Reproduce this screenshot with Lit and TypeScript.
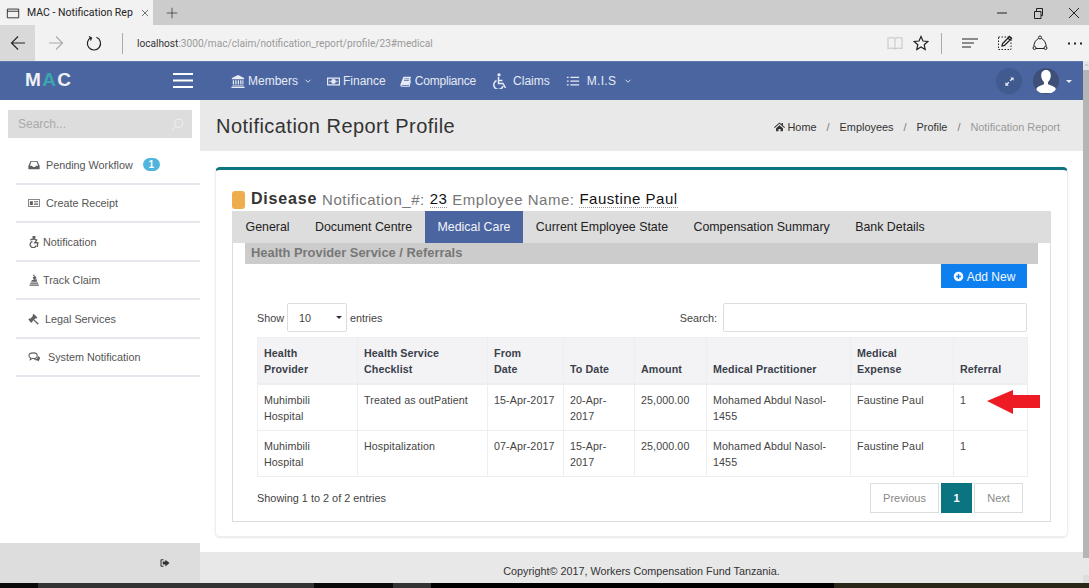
import { LitElement, html, css, svg } from 'lit';
import { customElement } from 'lit/decorators.js';

const icon = (body: unknown, size = 14, box = 16) => html`<svg class="ico" width=${size} height=${size} viewBox="0 0 ${box} ${box}">${body}</svg>`;

const icons = {
  bank: svg`<path fill="currentColor" d="M8 1 1 4.500V6h14V4.500zM2 7h1.500v5H2zm2.800 0h1.500v5H4.800zm2.900 0h1.500v5H7.700zm2.800 0H12v5h-1.500zm2.500 0h1.200v5H13zM1.500 13h13v1h-13zM.5 14.500h15V16H.5z"/>`,
  money: svg`<path fill="currentColor" fill-rule="evenodd" d="M0 3h16v10H0zm1.500 1.500v7h13v-7zM8 5a3 3 0 1 1 0 6 3 3 0 0 1 0-6zM3 7h1.500v2H3zm8.500 0H13v2h-1.500z"/>`,
  book: svg`<path fill="currentColor" d="M5 1h11l-.7 2.500L13 13H3.500c-1 0-1.300.7-1 1.300H13l1.600-8 1.400.7L14 15.500H2.500C1 15.500 0 14 .6 12.500zm1.500 2.500-.3 1.300h7l.3-1.300zM6 6l-.3 1.300h7L13 6z"/>`,
  wheel: svg`<g fill="none" stroke="currentColor" stroke-width="1.500"><circle cx="8" cy="1.800" r=".9" fill="currentColor"/><path d="M7.500 4v6.500h4.500l2.500 4.500M7.500 7.500h4"/><path d="M5.500 7.500a4.700 4.700 0 1 0 6.500 5.500"/></g>`,
  list: svg`<path fill="currentColor" d="M1 3h2v1.500H1zm4 0h10v1.500H5zM1 7.300h2v1.500H1zm4 0h10v1.500H5zM1 11.600h2v1.500H1zm4 0h10v1.500H5z"/>`,
  inbox: svg`<path fill="currentColor" fill-rule="evenodd" d="M3.500 2.500h9L15.500 9v4.500H.5V9zm1 1.300L2.500 9h3l1 1.800h3l1-1.800h3l-2-5.200z"/>`,
  receipt: svg`<path fill="currentColor" fill-rule="evenodd" d="M0 3h16v10H0zm1 1v8h14V4zm1.500 1.500h4v5h-4zm5.500 0h5.500v1H8zm0 2h5.500v1H8zm0 2h5.500v1H8z"/>`,
  access: svg`<g fill="none" stroke="currentColor" stroke-width="1.800"><circle cx="8" cy="1.800" r="1.300" fill="currentColor"/><path d="M3 5 8 4l3.500 1.500L9 9h4l-.5 5.500"/><path d="M6 7.300a4.200 4.200 0 1 0 5 5.500"/></g>`,
  track: svg`<path fill="currentColor" d="M6.500 1h2v1.200h-2zM9 2l2.500 3.200L8 7.500 6.200 5zM2 14h12.500v1.500H2zM3 11.200h10.500v1.800H3zM5 8.200l6.500-1.400.5 3.400H4.200z"/>`,
  gavel: svg`<path fill="currentColor" d="M7.500 1l5 5-1.500 1.500-1-.6-1.700 1.700 6 5.500-1.300 1.400-5.700-5.900-1.700 1.700.6 1L4 13 .5 8.500 2 7l1 .6L6.600 4 6 3z"/>`,
  chat: svg`<g fill="none" stroke="currentColor" stroke-width="1.400"><path d="M7 2.500c3 0 5.300 1.500 5.300 3.700S10 10 7 10H5.500L3 11.500l.5-2.300C2 8.500 1.300 7.500 1.300 6.200 1.300 4 4 2.500 7 2.500z"/></g><path fill="currentColor" d="M13.500 6.500c1.500.7 2.500 1.800 2.500 3 0 1-.7 1.900-1.500 2.400l.5 2-2.500-1.400c-2 .2-4-.5-5-1.500 3.500.3 6.500-1.800 6-4.500z"/>`,
  home: svg`<path fill="currentColor" d="M8 2 0 9l1 1 7-6 7 6 1-1-3-2.600V3h-2v1.700zM3 10.500 8 6l5 4.500V15H9.500v-3.500h-3V15H3z"/>`,
  plus: svg`<path fill="currentColor" fill-rule="evenodd" d="M8 1a7 7 0 1 1 0 14A7 7 0 0 1 8 1zM7 4.500v2.500H4.500v2H7v2.500h2V9h2.500V7H9V4.500z"/>`,
  signout: svg`<path fill="currentColor" d="M6 3H3.500C2.500 3 2 3.500 2 4.500v7c0 1 .5 1.500 1.500 1.500H6v-1.300H3.400V4.300H6zM8.500 3.500 14 8l-5.500 4.500V10H5V6h3.500z"/>`,
  search: svg`<g fill="none" stroke="currentColor" stroke-width="1"><circle cx="9.500" cy="6.500" r="5"/><path d="M6 10 1.500 14.500"/></g>`,
};

const chevron = svg`<path fill="none" stroke="currentColor" stroke-width="1.800" d="m3 5.500 5 5 5-5"/>`;

const menu = [
  { label: 'Pending Workflow', icon: icons.inbox, gap: 'wide', badge: '1' },
  { label: 'Create Receipt', icon: icons.receipt, gap: 'wide' },
  { label: 'Notification', icon: icons.access, gap: 'narrow' },
  { label: 'Track Claim', icon: icons.track, gap: 'narrow' },
  { label: 'Legal Services', icon: icons.gavel, gap: 'mid' },
  { label: 'System Notification', icon: icons.chat, gap: 'wider' },
];

const tabs = ['General', 'Document Centre', 'Medical Care', 'Current Employee State', 'Compensation Summary', 'Bank Details'];

const columns = ['Health\nProvider', 'Health Service\nChecklist', 'From\nDate', 'To Date', 'Amount', 'Medical Practitioner', 'Medical\nExpense', 'Referral'];

const rows = [
  ['Muhimbili Hospital', 'Treated as outPatient', '15-Apr-2017', '20-Apr-2017', '25,000.00', 'Mohamed Abdul Nasol-1455', 'Faustine Paul', '1'],
  ['Muhimbili Hospital', 'Hospitalization', '07-Apr-2017', '15-Apr-2017', '25,000.00', 'Mohamed Abdul Nasol-1455', 'Faustine Paul', '1'],
];

const widths = [100, 130, 76, 71, 72, 144, 103, 74];

@customElement('app-root')
export class AppRoot extends LitElement {
  static styles = css`
    :host {
      display: flex;
      flex-direction: column;
      width: 1089px;
      height: 588px;
      overflow: hidden;
      font-family: "Liberation Sans", Arial, sans-serif;
      color: #333;
      background: #fff;
    }
    .ico { display: block; flex: none; }

    /* browser chrome */
    .strip { display: flex; height: 25px; background: #ccc; flex: none; }
    .tab {
      width: 153px; display: flex; align-items: center; background: #f2f2f2;
      padding: 0 6px 0 6px; box-sizing: border-box; gap: 7px;
      font: 10.500px Roboto, sans-serif; color: #222;
    }
    .tab-title { width: 108px; white-space: nowrap; }
    .new-tab { width: 38px; display: flex; align-items: center; justify-content: center; color: #333; }
    .win { margin-left: auto; display: flex; align-items: center; gap: 20px; padding-right: 7px; color: #222; }
    .toolbar { display: flex; align-items: center; height: 36px; background: #f2f2f2; flex: none; color: #222; }
    .back { width: 35px; height: 36px; display: flex; align-items: center; justify-content: center; background: #d9d9d9; }
    .fwd { width: 42px; display: flex; justify-content: center; color: #aaa; }
    .reload { width: 33px; display: flex; justify-content: center; }
    .sep { width: 1px; height: 21px; background: #aaa; flex: none; }
    .url { margin-left: 14px; font: 10.150px Roboto, sans-serif; color: #999; white-space: nowrap; }
    .url b { font-weight: 400; color: #333; }
    .tools { margin-left: auto; display: flex; align-items: center; }
    .tools .t { display: flex; justify-content: center; width: 35px; }

    /* body */
    .page { flex: 1; min-height: 0; display: flex; }
    .main-col { flex: 1; min-width: 0; display: flex; flex-direction: column; }
    .scrollbar { width: 6px; flex: none; display: flex; flex-direction: column; background: #e8e8e8; }
    .sb-top { height: 9px; background: #e6e6e6; flex: none; display: flex; justify-content: center; padding-top: 2px; box-sizing: border-box; color: #999; }
    .sb-thumb { height: 488px; background: #b5b5b5; flex: none; }
    .sb-low { margin-top: auto; height: 8px; flex: none; background: #ddd; }

    .nav { height: 39px; flex: none; display: flex; align-items: center; background: #4a65a0; border-top: 1px solid #5f78ad; box-sizing: border-box; color: #e6ebf5; font-size: 12px; }
    .logo { width: 173px; padding-left: 25px; box-sizing: border-box; font-weight: 700; font-size: 19px; letter-spacing: 1.400px; color: #eef1f7; margin-top: -3px; }
    .logo i { font-style: normal; color: #3aa6ad; }
    .burger { width: 58px; }
    .burger svg { color: #fff; }
    .nav-item { display: flex; align-items: center; gap: 3px; margin-right: 16px; }
    .chev-a { margin-left: 3px; }
    .chev-b { margin-left: 1px; }
    .nav-right { margin-left: auto; display: flex; align-items: center; padding-right: 11px; gap: 10.500px; }
    .circle { width: 26px; height: 26px; border-radius: 50%; background: #415a90; display: flex; align-items: center; justify-content: center; overflow: hidden; }
    .circle.user { background: #3e5078; }
    .caret { width: 0; height: 0; border: 3.500px solid transparent; border-top-color: #e6ebf5; border-bottom: 0; margin-left: -3px; }

    .content { flex: 1; min-height: 0; display: flex; }
    .sidebar { width: 200px; flex: none; display: flex; flex-direction: column; background: #fff; }
    .side-search { margin: 10px 8px 8px; height: 28px; background: #ddd; display: flex; align-items: center; justify-content: space-between; padding: 0 8px 0 10px; font-size: 12px; color: #aaa; }
    .side-search svg { color: #f4f4f4; }
    .side-menu { margin-left: 16px; flex: 1; }
    .side-item { height: 38.500px; box-sizing: border-box; border-bottom: 2px solid #e6e6ee; display: flex; align-items: center; padding: 1px 0 0 12px; font-size: 10.800px; color: #555; }
    .side-item .ico { color: #606060; }
    .wide { gap: 6px; }
    .narrow { gap: 3px; }
    .mid { gap: 5px; }
    .wider { gap: 8px; }
    .badge { margin-left: 4px; width: 17px; height: 13px; border-radius: 7px; background: #4fb5dc; color: #fff; font-size: 10px; font-weight: 700; text-align: center; line-height: 13px; }
    .side-foot { height: 40px; background: #ddd; display: flex; align-items: center; justify-content: flex-end; padding-right: 29px; color: #333; }

    .main { flex: 1; min-width: 0; display: flex; flex-direction: column; }
    .head { height: 51px; flex: none; background: #e9e9e9; display: flex; align-items: center; justify-content: space-between; padding: 0 23px 0 16px; }
    .head h1 { margin: 0; padding-top: 2px; font-size: 20px; font-weight: 400; color: #333; letter-spacing: .46px; }
    .crumbs { display: flex; align-items: center; font-size: 10.900px; color: #333; padding-top: 2px; }
    .crumbs span.s { margin: 0 10px; color: #777; }
    .crumbs .home { display: flex; align-items: center; gap: 3px; }
    .crumbs .now { color: #999; }

    .body { flex: 1; min-height: 0; padding: 16px 15px 15px; background: #fff; }
    .card { height: 100%; box-sizing: border-box; border: 1px solid #eee; border-top: 3px solid #0e7480; border-radius: 5px; padding: 17px 16px 16px; box-shadow: 0 1px 2px #e6e6e6; }
    .title { display: flex; align-items: center; height: 24px; font-size: 15px; color: #777; letter-spacing: .5px; white-space: nowrap; }
    .flag { width: 13px; height: 18px; border-radius: 3px; background: #f0ad4e; margin-right: 6px; margin-top: 1px; }
    .title strong { font-size: 16px; color: #333; margin-right: 5px; letter-spacing: .8px; }
    .title em { font-style: normal; color: #111; border-bottom: 1px dotted #999; margin: 0 5px; line-height: 17px; }
    .panel { border: 1px solid #ddd; border-top: 0; height: 310px; }
    .tabs { display: flex; height: 32px; background: #ddd; padding-left: 1px; margin: 0 -1px; }
    .tabs div { display: flex; align-items: center; padding: 0 12.700px; font-size: 12.400px; color: #222; }
    .tabs div:first-child { padding-left: 12.500px; }
    .tabs .on { background: #4a65a0; color: #f2f4fa; }
    .section { margin: 0 12px; height: 21px; background: #ccc; display: flex; align-items: center; padding: 0 0 2px 6px; box-sizing: border-box; font-size: 12.900px; font-weight: 700; color: #777; }
    .inner { padding: 0 23px 0 24px; }
    .actions { display: flex; justify-content: flex-end; }
    .add { width: 86px; height: 24px; background: #0d7fef; color: #f4f8ff; display: flex; align-items: center; justify-content: center; gap: 3px; font-size: 12px; padding-top: 1px; box-sizing: border-box; }
    .filters { display: flex; align-items: center; justify-content: space-between; margin-top: 15px; font-size: 10.800px; color: #444; }
    .filters > div { display: flex; align-items: center; }
    .select { width: 60px; height: 29px; box-sizing: border-box; border: 1px solid #ddd; margin: 0 3px; display: flex; align-items: center; justify-content: space-between; padding: 0 4px 0 11px; border-radius: 2px; }
    .select i { border: 3.500px solid transparent; border-top-color: #333; border-bottom: 0; }
    .input { width: 304px; height: 29px; box-sizing: border-box; border: 1px solid #ddd; margin-left: 6px; border-radius: 2px; }
    table { border-collapse: collapse; table-layout: fixed; width: 770px; margin-top: 5px; font-size: 10.700px; color: #444; letter-spacing: .1px; }
    th, td { border: 1px solid #eee; padding: 0 6px; line-height: 16px; text-align: left; }
    th { background: #f3f3f6; height: 46px; vertical-align: bottom; padding-bottom: 6px; box-sizing: border-box; font-weight: 700; color: #3a3f4a; border-bottom-width: 2px; white-space: pre-line; }
    td { height: 46.500px; box-sizing: border-box; vertical-align: top; padding-top: 7px; }
    .foot { display: flex; justify-content: space-between; align-items: center; margin-top: 6px; font-size: 10.900px; color: #444; }
    .pager { display: flex; gap: 2px; padding-right: 4px; }
    .pager div { height: 30px; box-sizing: border-box; display: flex; align-items: center; justify-content: center; border: 1px solid #ddd; font-size: 11px; color: #888; }
    .pager .prev { width: 69px; }
    .pager .next { width: 49px; }
    .pager .cur { width: 31px; background: #0a7481; border-color: #0a7481; color: #fff; font-weight: 700; }
    .footer { height: 31px; flex: none; background: #e8e8e8; display: flex; align-items: flex-end; justify-content: center; padding-bottom: 6px; box-sizing: border-box; font-size: 10.800px; color: #333; }
    .taskbar { height: 5px; flex: none; background: #0a0a0a; display: flex; }
    .taskbar i { display: block; height: 5px; }

    .arrow { position: absolute; left: 987px; top: 390px; color: #ed1c24; }
  `;

  render() {
    return html`
      <div class="strip">
        <div class="tab">
          ${icon(svg`<path fill="none" stroke="currentColor" d="M1.500 3.500h13v10h-13zM1.500 6h13"/>`, 14)}
          <span class="tab-title">MAC - Notification Rep</span>
          ${icon(svg`<path fill="none" stroke="currentColor" d="m3 3 10 10M13 3 3 13"/>`, 10)}
        </div>
        <div class="new-tab">${icon(svg`<path fill="none" stroke="currentColor" d="M8 1v14M1 8h14"/>`, 12)}</div>
        <div class="win">
          ${icon(svg`<path stroke="currentColor" d="M3 8h10"/>`, 16)}
          ${icon(svg`<path fill="none" stroke="currentColor" d="M4.500 6.500h6.500v7H4.500zM6.500 6V3.500h6v7H11"/>`, 16)}
          ${icon(svg`<path fill="none" stroke="currentColor" d="m3 3 10 10M13 3 3 13"/>`, 16)}
        </div>
      </div>
      <div class="toolbar">
        <div class="back">${icon(svg`<path fill="none" stroke="currentColor" stroke-width="1.100" d="M15 8H1.500M8 1.500 1.500 8 8 14.500"/>`, 16)}</div>
        <div class="fwd">${icon(svg`<path fill="none" stroke="currentColor" stroke-width="1.100" d="M1 8h13.500M8 1.500 14.500 8 8 14.500"/>`, 16)}</div>
        <div class="reload">${icon(svg`<path fill="none" stroke="currentColor" stroke-width="1.200" d="M5 2.500a6.600 6.600 0 1 0 5.500-.2M3 1.500 5.500 3 4.500 5.500"/>`, 16)}</div>
        <div class="sep" style="margin-left:12px"></div>
        <div class="url"><b>localhost</b>:3000/mac/claim/notification_report/profile/23#medical</div>
        <div class="tools">
          <div class="t" style="color:#ccc;width:30px">${icon(svg`<path fill="none" stroke="currentColor" stroke-width="1.200" d="M8 3.500C6.500 2.500 3.500 2.500 1 3v10.500c2.500-.5 5.500-.5 7 .5 1.500-1 4.500-1 7-.5V3c-2.500-.5-5.500-.5-7 .5zm0 0V14"/>`, 16)}</div>
          <div class="t" style="width:22px">${icon(svg`<path fill="none" stroke="currentColor" stroke-width="1.200" d="m8 1.500 2 4.500 4.800.5-3.600 3.200 1 4.800L8 12l-4.200 2.500 1-4.800L1.200 6.500 6 6z"/>`, 16)}</div>
          <div class="sep" style="margin:0 11px 0 9px"></div>
          <div class="t">${icon(svg`<path stroke="currentColor" d="M0 4h16M0 8h12M0 12h9"/>`, 16)}</div>
          <div class="t">${icon(svg`<path fill="none" stroke="currentColor" stroke-dasharray="1.500 1.500" d="M1.500 2h12.500v12.500H1.500z"/><path fill="none" stroke="currentColor" stroke-width="1.300" d="m5 11 .6-2.500L12.500 1.500l2 2-7 7zM11 3l2 2"/>`, 16)}</div>
          <div class="t">${icon(svg`<g fill="none" stroke="currentColor"><circle cx="8" cy="2.500" r="1.500"/><circle cx="2.500" cy="13" r="1.500"/><circle cx="13.500" cy="13" r="1.500"/><path d="M6.500 3.500C3.500 5 2 8 1.800 11.500M9.500 3.500c3 1.500 4.500 4.500 4.700 8M4 13.500h8"/></g>`, 16)}</div>
          <div class="t" style="width:28px;margin-left:3.500px">${icon(svg`<path fill="currentColor" d="M1 7.500h2v2H1zM7 7.500h2v2H7zM13 7.500h2v2h-2z"/>`, 16)}</div>
        </div>
      </div>
      <div class="page">
        <div class="main-col">
          <div class="nav">
            <div class="logo">M<i>A</i>C</div>
            <div class="burger">${icon(svg`<path stroke="currentColor" stroke-width="2" d="M0 3h20M0 9.500h20M0 16h20"/>`, 20, 20)}</div>
            <div class="nav-item" style="margin-right:15px">${icon(icons.bank, 14)}Members<span class="chev-a">${icon(chevron, 8)}</span></div>
            <div class="nav-item" style="margin-right:14px">${icon(icons.money, 13)}Finance</div>
            <div class="nav-item" style="gap:4px;margin-right:15px;letter-spacing:-.2px">${icon(icons.book, 11)}Compliance</div>
            <div class="nav-item" style="gap:6px">${icon(icons.wheel, 16)}Claims</div>
            <div class="nav-item" style="gap:7px;letter-spacing:.3px">${icon(icons.list, 14)}M.I.S<span class="chev-b">${icon(chevron, 8)}</span></div>
            <div class="nav-right">
              <div class="circle">${icon(svg`<path fill="#e8edf6" d="M9 2h5v5l-1.800-1.800-2.500 2.500-1.400-1.400 2.500-2.500zM7 14H2V9l1.800 1.800 2.500-2.500 1.400 1.400-2.500 2.500z"/>`, 11)}</div>
              <div class="circle user">${icon(svg`<path fill="#fff" d="M13 2c3 0 4.800 2.300 4.800 5.500 0 3-1.500 5.500-2.800 6.500v2c1 1 5.500 2 7 3.500 1 1 1.200 3 1.200 5.500H3c0-2.500.2-4.500 1.200-5.500C5.700 18 10 17 11 16v-2C9.700 13 8.200 10.500 8.200 7.500 8.200 4.300 10 2 13 2z"/>`, 26, 26)}</div>
              <div class="caret"></div>
            </div>
          </div>
          <div class="content">
            <div class="sidebar">
              <div class="side-search">Search...${icon(icons.search, 13)}</div>
              <div class="side-menu">
                ${menu.map(m => html`
                  <div class="side-item ${m.gap}">${icon(m.icon, 12)}${m.label}${m.badge ? html`<span class="badge">${m.badge}</span>` : ''}</div>
                `)}
              </div>
              <div class="side-foot">${icon(icons.signout, 12)}</div>
            </div>
            <div class="main">
              <div class="head">
                <h1>Notification Report Profile</h1>
                <div class="crumbs">
                  <span class="home">${icon(icons.home, 11)}Home</span><span class="s">/</span>
                  <span>Employees</span><span class="s">/</span>
                  <span>Profile</span><span class="s">/</span>
                  <span class="now">Notification Report</span>
                </div>
              </div>
              <div class="body">
                <div class="card">
                  <div class="title">
                    <span class="flag"></span><strong>Disease</strong>Notification_#:<em>23</em>Employee Name:<em>Faustine Paul</em>
                  </div>
                  <div class="panel">
                    <div class="tabs">
                      ${tabs.map(t => html`<div class=${t === 'Medical Care' ? 'on' : ''}>${t}</div>`)}
                    </div>
                    <div class="section">Health Provider Service / Referrals</div>
                    <div class="inner">
                      <div class="actions"><div class="add">${icon(icons.plus, 11)}Add New</div></div>
                      <div class="filters">
                        <div>Show<div class="select">10<i></i></div>entries</div>
                        <div>Search:<div class="input"></div></div>
                      </div>
                      <table>
                        <colgroup>${widths.map(w => html`<col style="width:${w}px">`)}</colgroup>
                        <thead><tr>${columns.map(c => html`<th>${c}</th>`)}</tr></thead>
                        <tbody>
                          ${rows.map(r => html`<tr>${r.map(c => html`<td>${c}</td>`)}</tr>`)}
                        </tbody>
                      </table>
                      <div class="foot">
                        <span>Showing 1 to 2 of 2 entries</span>
                        <div class="pager">
                          <div class="prev">Previous</div>
                          <div class="cur">1</div>
                          <div class="next">Next</div>
                        </div>
                      </div>
                    </div>
                  </div>
                </div>
              </div>
              <div class="footer">Copyright© 2017, Workers Compensation Fund Tanzania.</div>
            </div>
          </div>
        </div>
        <div class="scrollbar">
          <div class="sb-top">${icon(svg`<path fill="none" stroke="currentColor" stroke-width="2" d="m2 10 6-6 6 6"/>`, 5)}</div>
          <div class="sb-thumb"></div>
          <div class="sb-low"></div>
        </div>
      </div>
      <div class="taskbar">
        <i style="width:38px;background:#0a0a0a"></i>
        <i style="width:276px;background:#333"></i>
        <i style="width:79px;background:#0a0a0a"></i>
        <i style="width:38px;background:#333"></i>
        <i style="width:403px;background:#000"></i>
        <i style="width:255px;background:#2a2618"></i>
      </div>
      <svg class="arrow" width="53" height="24" viewBox="0 0 53 24"><path fill="currentColor" d="M0 11 26 0v5h27v13H26v6z"/></svg>
    `;
  }
}
